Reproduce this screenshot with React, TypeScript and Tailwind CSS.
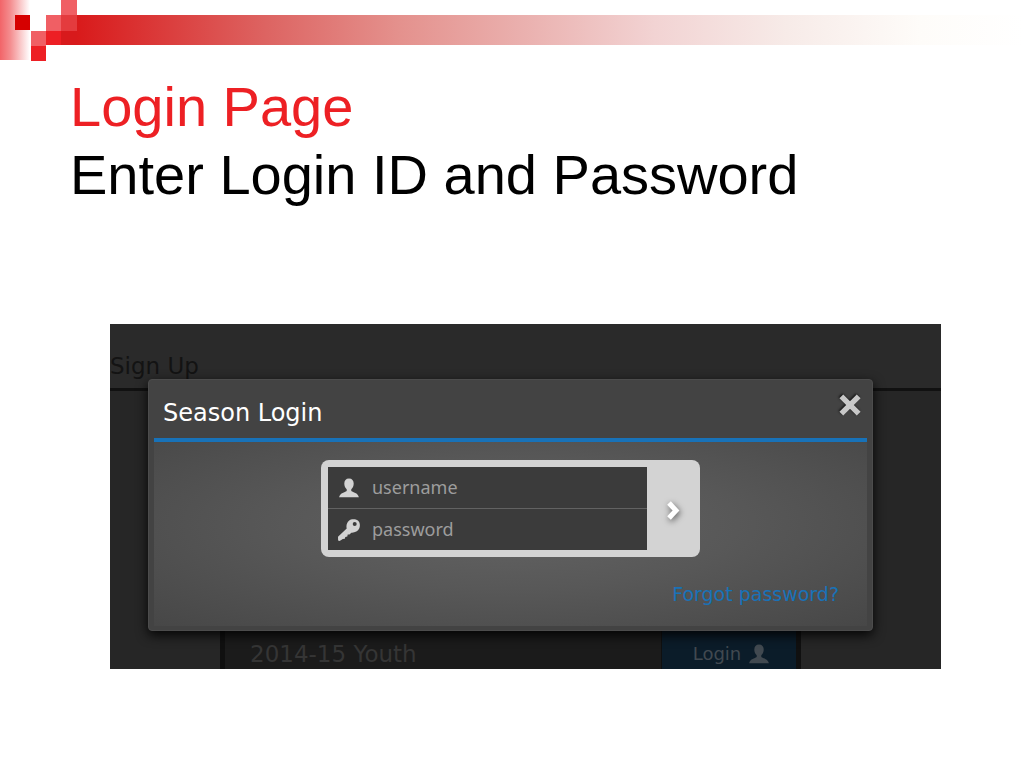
import React, { useState } from "react";

function UserIcon({ className }: { className?: string }) {
  return (
    <svg viewBox="0 0 20 20" className={className} fill="currentColor" aria-hidden="true">
      <path d="M10 0.6c3.100 0 4.700 2 4.700 5 0 2.400-.9 4.300-2.200 5.400-.4.5-.4 1.900.1 2.300 1.300 1 6.200 1.500 7.300 5.900H.1c1.100-4.400 6-4.900 7.300-5.900.5-.4.5-1.800.1-2.300C6.200 9.900 5.300 8 5.300 5.600c0-3 1.600-5 4.700-5z" />
    </svg>
  );
}

function KeyIcon({ className }: { className?: string }) {
  return (
    <svg viewBox="0 0 22 22" className={className} fill="currentColor" aria-hidden="true">
      <path
        fillRule="evenodd"
        d="M11 1.800C13-.1 17.500-.2 19.900 1.600c2.200 1.700 2.500 5.500 1.300 8-1.200 2.800-4.700 4.400-7.900 4.100l-1.800 1.700-1.800.2-.4 2-2 .3-.5 1.900-2 .3L1.600 22 .1 21.500 0 17.800l8.700-8.400C7.900 6.500 9 3.300 11 1.800zM16.700 2.900a2 2 0 1 0 0 4 2 2 0 0 0 0-4z"
      />
    </svg>
  );
}

function SlideBanner() {
  return (
    <div className="flex h-[61px] items-start">
      <svg width="77" height="61" viewBox="0 0 77 61" className="shrink-0" shapeRendering="crispEdges" aria-hidden="true">
        <defs>
          <linearGradient id="fade" x1="0" x2="1" y1="0" y2="0">
            <stop offset="0" stopColor="#f26468" />
            <stop offset="0.35" stopColor="#f48e90" />
            <stop offset="1" stopColor="#ffffff" />
          </linearGradient>
        </defs>
        <rect width="30" height="60" fill="url(#fade)" />
        <rect x="15" y="15" width="15" height="15" fill="#d60000" />
        <rect x="31" y="31" width="15" height="15" fill="#f05f64" />
        <rect x="31" y="46" width="15" height="15" fill="#ed1f24" />
        <rect x="46" y="15" width="15" height="16" fill="#f05f64" />
        <rect x="46" y="31" width="15" height="14" fill="#ed1f24" />
        <rect x="61" y="0" width="16" height="15" fill="#f05f64" />
        <rect x="61" y="15" width="16" height="16" fill="#e43b3e" />
        <rect x="61" y="31" width="16" height="14" fill="#d81a1c" />
      </svg>
      <div className="mt-[15px] h-[30px] flex-1 bg-[linear-gradient(to_right,#d91a1b_0%,#dd6462_20%,#e4918d_34%,#eab0ae_47%,#f2d3d3_61%,#f7ebe8_75%,#fefcf9_89%,#ffffff_100%)]" />
    </div>
  );
}

function LoginDialog() {
  const [username, setUsername] = useState("");
  const [password, setPassword] = useState("");

  return (
    <div
      role="dialog"
      aria-labelledby="dialog-title"
      className="flex h-full flex-col rounded-sm border border-[#4c4c4c] bg-[#434343] px-[5px] py-1 shadow-[0_4px_12px_rgba(0,0,0,0.9)]"
    >
      <div className="flex h-[58px] items-start justify-between border-b-4 border-[#1872b8] pl-2">
        <h2 id="dialog-title" className="pt-[13px] pl-px text-[24px] leading-[32px] text-white">
          Season Login
        </h2>
        <button type="button" aria-label="Close" className="mt-1 p-1 text-[#c8c8c8]">
          <svg width="26" height="26" viewBox="0 0 24 24" className="drop-shadow-[-1px_-1px_1px_rgba(0,0,0,0.7)]" aria-hidden="true">
            <path d="M4 4l16 16M20 4L4 20" stroke="currentColor" strokeWidth="5" />
          </svg>
        </button>
      </div>
      <form
        className="flex flex-1 flex-col bg-[radial-gradient(ellipse_at_50%_45%,#636363_0%,#585858_45%,#474747_100%)] pt-[18px]"
        onSubmit={(e) => e.preventDefault()}
      >
        <div className="mx-auto flex w-[379px] max-w-full rounded-lg bg-[#d3d3d3] py-[7px] pl-[7px]">
          <div className="flex-1 bg-[#3b3b3b] font-['Noto_Sans',sans-serif] text-[18px]">
            <label className="flex h-[42px] items-center gap-3 border-b border-[#626262] pl-[10px] text-[#d3d3d3]">
              <UserIcon className="size-[22px] shrink-0 p-px" />
              <input
                type="text"
                aria-label="Username"
                placeholder="username"
                value={username}
                onChange={(e) => setUsername(e.target.value)}
                className="w-full min-w-0 bg-transparent outline-none placeholder:text-[#9d9d9d]"
              />
            </label>
            <label className="flex h-[41px] items-center gap-3 pl-[10px] text-[#d3d3d3]">
              <KeyIcon className="size-[22px] shrink-0" />
              <input
                type="password"
                aria-label="Password"
                placeholder="password"
                value={password}
                onChange={(e) => setPassword(e.target.value)}
                className="w-full min-w-0 bg-transparent outline-none placeholder:text-[#9d9d9d]"
              />
            </label>
          </div>
          <button type="submit" aria-label="Log in" className="flex w-[53px] items-center justify-center text-white">
            <svg width="24" height="24" viewBox="0 0 24 24" className="drop-shadow-[1px_2px_3px_rgba(0,0,0,0.6)]" aria-hidden="true">
              <path d="M7 6l7 7.500L7 21" fill="none" stroke="currentColor" strokeWidth="5" />
            </svg>
          </button>
        </div>
        <a href="#forgot" className="mt-[23px] mr-7 self-end text-[19px] leading-[28px] text-[#1872b8]">
          Forgot password?
        </a>
      </form>
    </div>
  );
}

export default function App() {
  return (
    <main className="min-h-screen bg-white">
      <SlideBanner />
      <h1 className="px-[70px] pt-3 font-['Liberation_Sans',sans-serif] text-[56px] leading-[68px] text-black">
        <span className="block text-[#ed2024]">Login Page</span>
        Enter Login ID and Password
      </h1>

      <section className="relative mt-[115px] mr-[83px] ml-[110px] flex h-[345px] flex-col overflow-hidden bg-[#262626] font-['DejaVu_Sans',Verdana,sans-serif]">
        <div className="h-[67px] border-b-[3px] border-[#111111] bg-[#2a2a2a] pt-[26px] text-[23px] leading-[32px] text-[#131313]">
          Sign Up
        </div>
        <div className="flex flex-1 items-end pr-[140px] pl-[110px]">
          <div className="flex h-20 flex-1 items-end justify-between border-x-[5px] border-[#101010] bg-[#1b1b1b] pl-[25px]">
            <span className="text-[23px] leading-[30px] text-[#353535]">2014-15 Youth</span>
            <button type="button" className="flex h-full w-[135px] items-end justify-center gap-2 border-l border-[#101010] bg-[#0b1c29] pl-1 text-[18px] leading-[30px] text-[#414950]">
              Login
              <UserIcon className="mb-[5px] size-5" />
            </button>
          </div>
        </div>

        <div className="absolute inset-0 pt-[55px] pr-[68px] pb-[38px] pl-[38px]">
          <LoginDialog />
        </div>
      </section>
    </main>
  );
}
